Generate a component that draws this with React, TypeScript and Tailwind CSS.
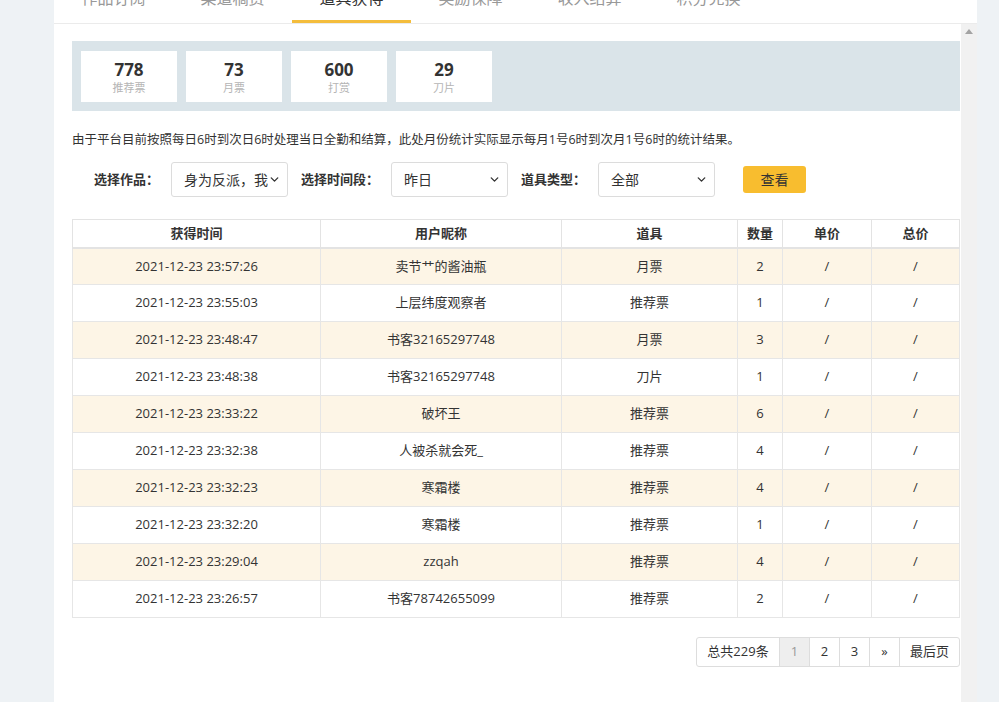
import { ChevronDown } from "lucide-react";

const tabs = ["作品订阅", "渠道稿费", "道具获得", "奖励保障", "收入结算", "积分兑换"];

const stats = [
  { num: "778", label: "推荐票" },
  { num: "73", label: "月票" },
  { num: "600", label: "打赏" },
  { num: "29", label: "刀片" },
];

const rows = [
  ["2021-12-23 23:57:26", "卖节艹的酱油瓶", "月票", "2"],
  ["2021-12-23 23:55:03", "上层纬度观察者", "推荐票", "1"],
  ["2021-12-23 23:48:47", "书客32165297748", "月票", "3"],
  ["2021-12-23 23:48:38", "书客32165297748", "刀片", "1"],
  ["2021-12-23 23:33:22", "破坏王", "推荐票", "6"],
  ["2021-12-23 23:32:38", "人被杀就会死_", "推荐票", "4"],
  ["2021-12-23 23:32:23", "寒霜楼", "推荐票", "4"],
  ["2021-12-23 23:32:20", "寒霜楼", "推荐票", "1"],
  ["2021-12-23 23:29:04", "zzqah", "推荐票", "4"],
  ["2021-12-23 23:26:57", "书客78742655099", "推荐票", "2"],
];

const cols = ["获得时间", "用户昵称", "道具", "数量", "单价", "总价"];
const widths = ["w-[248px]", "w-[241px]", "w-[176px]", "w-[45px]", "w-[89px]", "w-[88px]"];

function Select({ value }: { value: string }) {
  return (
    <div className="w-[117px] h-[35px] border border-[#dcdcdc] rounded-[3px] bg-white flex items-center pl-[12px] pr-[6px] text-[14px] text-[#333]">
      <span className="flex-1 overflow-hidden whitespace-nowrap">{value}</span>
      <ChevronDown className="w-[13px] h-[13px] text-[#333]" strokeWidth={2.5} />
    </div>
  );
}

export default function App() {
  return (
    <div
      className="h-[702px] bg-[#eef2f5] flex overflow-hidden"
      style={{ fontFamily: '"Open Sans", "Noto Sans CJK SC", sans-serif' }}
    >
      <div className="w-[54px] shrink-0" />
      <div className="w-[923px] shrink-0 bg-white flex flex-col">
        {/* 标签栏 */}
        <div className="h-[24px] border-b border-[#ebebeb] flex overflow-hidden">
          {tabs.map((t, i) => (
            <div key={t} className="w-[119px] h-[23px] flex flex-col items-center">
              <span
                className={`mt-[-12px] leading-[20px] text-[16px] ${
                  i === 2 ? "text-[#333]" : "text-[#999]"
                }`}
              >
                {t}
              </span>
              <div className="flex-1" />
              {i === 2 && <div className="w-full h-[3px] bg-[#f4bd3c]" />}
            </div>
          ))}
        </div>

        <div className="flex-1 flex">
          <div className="w-[907px] pl-[18px] pr-[1px] pt-[17px]">
            {/* 统计 */}
            <div className="h-[70px] bg-[#dae4e9] pt-[10px] px-[9px] flex gap-[9px]">
              {stats.map((s) => (
                <div key={s.label} className="w-[96px] h-[51px] bg-white flex flex-col items-center pt-[9px]">
                  <span className="text-[17px] font-bold leading-[20px] text-[#333]">{s.num}</span>
                  <span className="text-[11px] leading-[14px] mt-[1px] text-[#b5b5b5]">{s.label}</span>
                </div>
              ))}
            </div>

            <p className="mt-[19px] text-[12.5px] leading-[20px] text-[#333] whitespace-nowrap">
              由于平台目前按照每日6时到次日6时处理当日全勤和结算，此处月份统计实际显示每月1号6时到次月1号6时的统计结果。
            </p>

            {/* 筛选 */}
            <div className="mt-[12px] h-[35px] pl-[22px] flex items-center text-[13px] text-[#333]">
              <span className="font-bold mr-[12px]">选择作品：</span>
              <Select value="身为反派，我就" />
              <span className="font-bold ml-[13px] mr-[12px]">选择时间段：</span>
              <Select value="昨日" />
              <span className="font-bold ml-[13px] mr-[12px]">道具类型：</span>
              <Select value="全部" />
              <button className="ml-[28px] w-[63px] h-[27px] rounded-[3px] bg-[#f8bd2f] text-[14px] text-[#333]">
                查看
              </button>
            </div>

            {/* 表格 */}
            <table className="mt-[22px] w-[887px] border-collapse table-fixed text-[13px] text-[#333]">
              <thead>
                <tr>
                  {cols.map((c, i) => (
                    <th key={c} className={`${widths[i]} h-[28px] border border-[#e3e3e3] border-b-2 font-bold text-center`}>
                      {c}
                    </th>
                  ))}
                </tr>
              </thead>
              <tbody>
                {rows.map((r, i) => (
                  <tr key={i} className={i % 2 === 0 ? "bg-[#fdf5e6]" : "bg-white"}>
                    {[r[0], r[1], r[2], r[3], "/", "/"].map((v, j) => (
                      <td key={j} className="h-[37px] border border-[#e6e6e6] text-center">
                        {v}
                      </td>
                    ))}
                  </tr>
                ))}
              </tbody>
            </table>

            {/* 分页 */}
            <div className="mt-[19px] flex justify-end">
              <div className="flex h-[30px] border border-[#dddddd] rounded-[3px] text-[13px] text-[#333] overflow-hidden">
                <span className="w-[82px] flex items-center justify-center">总共229条</span>
                <span className="w-[30px] flex items-center justify-center border-l border-[#dddddd] bg-[#eeeeee] text-[#999]">1</span>
                <span className="w-[30px] flex items-center justify-center border-l border-[#dddddd]">2</span>
                <span className="w-[30px] flex items-center justify-center border-l border-[#dddddd]">3</span>
                <span className="w-[30px] flex items-center justify-center border-l border-[#dddddd]">»</span>
                <span className="w-[60px] flex items-center justify-center border-l border-[#dddddd]">最后页</span>
              </div>
            </div>
          </div>

          {/* 滚动条 */}
          <div className="w-[16px] bg-[#f1f1f1] flex justify-center pt-[5px]">
            <svg width="8" height="5" viewBox="0 0 8 5">
              <polygon points="4,0 8,5 0,5" fill="#a3a3a3" />
            </svg>
          </div>
        </div>
      </div>
    </div>
  );
}
